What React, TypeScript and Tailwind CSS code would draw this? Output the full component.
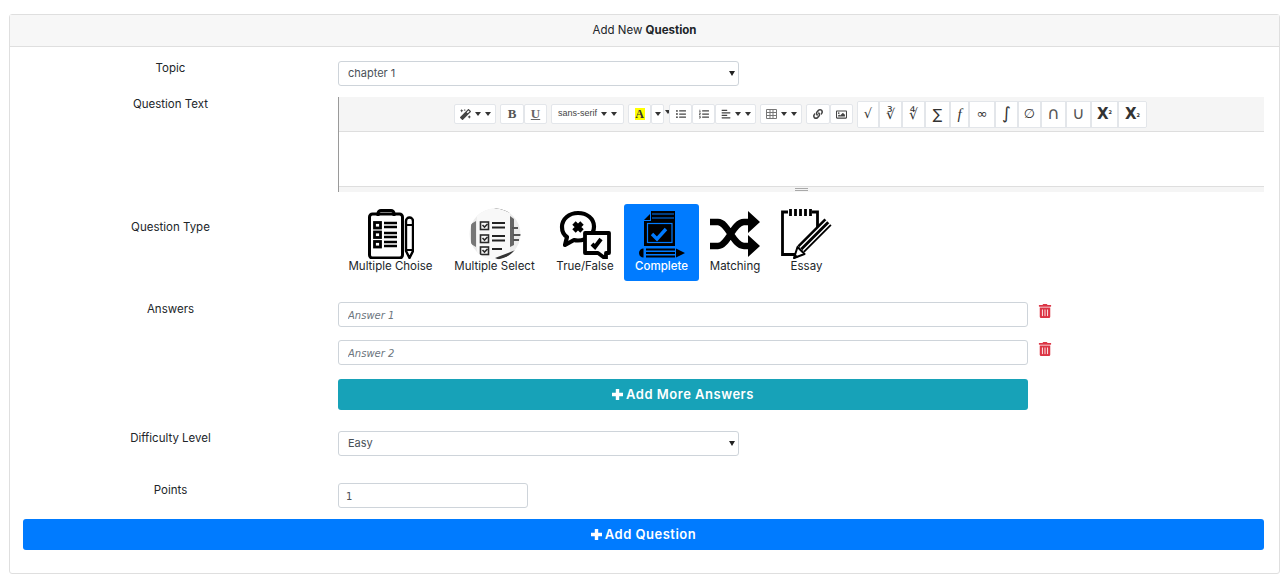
import React from "react";
import { FaMagic, FaListUl, FaListOl, FaAlignLeft, FaLink, FaRegImage, FaTrashAlt } from "react-icons/fa";

const Caret = () => <span className="inline-block w-0 h-0 border-x-[3px] border-x-transparent border-t-[4px] border-t-[#333]" />;

const Plus = () => (
  <svg width="11" height="11" viewBox="0 0 11 11" fill="#fff"><path d="M3.800 0h3.400v3.800H11v3.400H7.200V11H3.800V7.200H0V3.800h3.800z" /></svg>
);

function TB({ w, cls = "", children }: { w: number; cls?: string; children: React.ReactNode }) {
  return (
    <div style={{ width: w }} className={`h-[20px] bg-white border border-[#e3e6ea] rounded-[2px] flex items-center justify-center gap-[4px] text-[#444] ${cls}`}>
      {children}
    </div>
  );
}

function MB({ w, cls = "", children }: { w: number; cls?: string; children: React.ReactNode }) {
  return (
    <div style={{ width: w }} className={`h-[25px] bg-white border-r-2 border-[#e3e6ea] flex items-center justify-center text-[#333] font-['DejaVu_Sans',sans-serif] ${cls}`}>
      {children}
    </div>
  );
}

const ChoiceIcon = () => (
  <svg width="46" height="50" viewBox="0 0 46 50" fill="none" stroke="#000">
    <rect x="1.500" y="5" width="33" height="44" rx="3" strokeWidth="3" />
    <path d="M10 7V4.500a3 3 0 0 1 3-3h10a3 3 0 0 1 3 3V7" strokeWidth="3" />
    <rect x="6.500" y="13.500" width="6" height="5.500" strokeWidth="2.800" />
    <rect x="6.500" y="23" width="6" height="5.500" strokeWidth="2.800" />
    <rect x="6.500" y="32.500" width="6" height="5.500" strokeWidth="2.800" />
    <path d="M16 14h13M16 18h13M16 24h13M16 28h13M16 33h13M16 37h13" strokeWidth="2.400" />
    <path d="M38 12a3.500 3.500 0 0 1 7 0v30l-3.500 7-3.500-7z" strokeWidth="2.400" strokeLinejoin="round" />
    <path d="M38 16h7M38 41h7" strokeWidth="2" />
  </svg>
);

const SelectIcon = () => (
  <svg width="52" height="52" viewBox="0 0 52 52" fill="none">
    <defs><clipPath id="sc"><circle cx="26" cy="26" r="25.500" /></clipPath></defs>
    <g clipPath="url(#sc)">
      <rect width="52" height="52" fill="#ececec" />
      <path d="M2 16l5-3v26l-5-3z" fill="#777" />
      <path d="M25 0h18l2 5-12-1z" fill="#222" />
      <path d="M41 8l4 3v26l-4 2z" fill="#666" />
      <path d="M8 0h33v52H8z" fill="#f8f8f8" />
      <g stroke="#2a2a2a" strokeWidth="1.600">
        <rect x="11.500" y="14" width="8" height="7.500" />
        <rect x="11.500" y="27" width="8" height="7.500" />
        <rect x="11.500" y="39" width="8" height="7.500" />
        <path d="M13.500 17l2 2 3-3M13.500 30l2 2 3-3M13.500 42l2 2 3-3" />
      </g>
      <path d="M23 15h13M23 19.500h13M23 28h13M23 32.500h13M23 41h10" stroke="#222" strokeWidth="2" />
      <path d="M43 20h6M44 27h8M44 32h6" stroke="#555" strokeWidth="2" />
      <path d="M26 50l23-9 2 2-20 9z" fill="#333" />
    </g>
  </svg>
);

const TrueFalseIcon = () => (
  <svg width="52" height="50" viewBox="0 0 52 50" fill="none" stroke="#000">
    <path d="M19 4C10 4 3 10 3 18c0 4 2 8 5 10l-2 8 9-5c1 .3 3 .5 4 .5 9 0 16-6 16-14S28 4 19 4z" strokeWidth="4.200" strokeLinejoin="round" fill="#fff" />
    <path d="M15 14l8 8M23 14l-8 8" strokeWidth="4.800" />
    <path d="M26 24h24v20h-3v6l-8-6H26z" strokeWidth="3.800" strokeLinejoin="round" fill="#fff" />
    <path d="M33 35l3 3 6-8" strokeWidth="4" />
  </svg>
);

const CompleteIcon = () => (
  <svg width="46" height="50" viewBox="0 0 46 50">
    <path d="M5 11l6-6v6z" fill="#000" />
    <path d="M12 2h24v10H12z" fill="#000" />
    <path d="M13 5h22M13 9h22" stroke="#007bff" strokeWidth="1.200" />
    <rect x="5" y="12" width="31" height="25" fill="#000" />
    <rect x="8.500" y="14.500" width="24.500" height="19" fill="#000" stroke="#007bff" strokeWidth="1.200" />
    <path d="M13 25l5 5 9-10" stroke="#007bff" strokeWidth="3.400" fill="none" />
    <path d="M0 44a4.500 4.500 0 0 1 4.500-4.500V48.500A4.500 4.500 0 0 1 0 44zM7 39.500h29v2H7zM7 43h29v2H7zM7 46.500h29v2H7zM37 39.500l9 4.500-9 4.500z" fill="#000" />
  </svg>
);

const MatchingIcon = () => (
  <svg width="50" height="46" viewBox="0 0 50 46" fill="none" stroke="#000">
    <path d="M0 11h8c10 0 15 24 26 24h4M0 35h8c10 0 15-24 26-24h4" strokeWidth="6.500" />
    <path d="M38 0l12 11-12 11zM38 24l12 11-12 11z" fill="#000" stroke="none" />
  </svg>
);

const EssayIcon = () => (
  <svg width="52" height="50" viewBox="0 0 52 50" fill="none" stroke="#000">
    <path d="M7 3H1.500v42.500H15M31 3h5.500v19" strokeWidth="2.800" />
    <path d="M9.500 0v7M14.500 0v7M19.500 0v7M24.500 0v7M29.500 0v7" strokeWidth="2.800" />
    <path d="M20 40l27-27" stroke="#000" strokeWidth="10" />
    <path d="M19 38.500l27-27M22 41.500l27-27" stroke="#fff" strokeWidth="1.400" />
    <path d="M13 49l3.500-11 7 7z" fill="#fff" strokeWidth="2" strokeLinejoin="round" />
    <path d="M12.500 50l1.500-5 3.500 3z" fill="#000" stroke="none" />
  </svg>
);

const types = [
  { w: 105, label: "Multiple Choise", icon: <ChoiceIcon /> },
  { w: 103, label: "Multiple Select", icon: <SelectIcon /> },
  { w: 78, label: "True/False", icon: <TrueFalseIcon /> },
  { w: 75, label: "Complete", icon: <CompleteIcon />, active: true },
  { w: 72, label: "Matching", icon: <MatchingIcon /> },
  { w: 71, label: "Essay", icon: <EssayIcon /> },
];

function Row({ label, top, cls = "", children }: { label: string; top: number; cls?: string; children: React.ReactNode }) {
  return (
    <div className={`flex ${cls}`}>
      <div style={{ paddingTop: top }} className="w-[295px] shrink-0 text-center text-[11.500px] leading-[15px] text-[#212529]">{label}</div>
      <div className="ml-[20px] flex-1 min-w-0">{children}</div>
    </div>
  );
}

function Select({ text }: { text: string }) {
  return (
    <div className="relative w-[401px]">
      <select className="block appearance-none h-[25px] w-full border border-[#ced4da] rounded-[3px] bg-white pl-[9px] pb-[1px] text-[11px] text-[#495057] font-['Inter',sans-serif]">
        <option>{text}</option>
      </select>
      <span className="absolute right-[4px] top-[10px] w-0 h-0 border-x-[3.500px] border-x-transparent border-t-[5px] border-t-[#222]" />
    </div>
  );
}

function Answer({ text, cls }: { text: string; cls: string }) {
  return (
    <div className={`flex ${cls}`}>
      <input placeholder={text} className="h-[25px] w-[690px] border border-[#ced4da] rounded-[3px] bg-white px-[9px] pt-[1px] text-[10px] italic font-['DejaVu_Sans',sans-serif] placeholder:text-[#6c757d]" />
      <FaTrashAlt className="ml-[10px] mt-[2px] text-[#dc3545]" size={14} />
    </div>
  );
}

export default function App() {
  return (
    <div className="bg-white h-[586px] pt-[14px] pl-[9px] pr-[6px] font-['Inter',sans-serif] overflow-hidden">
      <div className="border border-[#dfdfdf] rounded-[3px] h-[560px]">
        <div className="h-[32px] bg-[#f7f7f7] border-b border-[#dfdfdf] flex items-center justify-center text-[11.500px] leading-[15px] text-[#212529]">
          Add New&nbsp;<b className="font-bold">Question</b>
        </div>
        <div className="pl-[13px] pr-[15px]">
          <Row label="Topic" top={0} cls="mt-[14px]">
            <Select text="chapter 1" />
          </Row>
          <Row label="Question Text" top={0} cls="mt-[11px]">
            <div className="h-[95px] border-l border-[#9a9a9a] flex flex-col">
              <div className="h-[35px] bg-[#f5f5f5] border-b border-[#dedede] flex items-center justify-center gap-[4px] text-[9px] pr-[2px]">
                <TB w={42}><FaMagic size={11} /><Caret /><Caret /></TB>
                <div className="flex">
                  <TB w={24} cls="font-['Liberation_Serif',serif] font-bold text-[13px] text-[#555]">B</TB>
                  <TB w={23} cls="font-['Liberation_Serif',serif] font-bold text-[13px] underline text-[#666]">U</TB>
                </div>
                <TB w={73} cls="font-['Liberation_Sans',sans-serif] text-[9px]">sans-serif <Caret /><Caret /></TB>
                <div className="flex">
                  <TB w={23}><span className="bg-[#ffff00] w-[10px] h-[12px] flex items-center justify-center font-['Liberation_Serif',serif] font-bold text-[12px] leading-none text-[#333]">A</span></TB>
                  <TB w={13}><Caret /></TB>
                  <div className="w-[5px] pl-[1px]"><Caret /></div>
                  <TB w={23}><FaListUl size={10} /></TB>
                  <TB w={23}><FaListOl size={10} /></TB>
                  <TB w={41}><FaAlignLeft size={10} /><Caret /><Caret /></TB>
                </div>
                <TB w={42}>
                  <svg width="11" height="10" viewBox="0 0 11 10" fill="none" stroke="#777"><path d="M.5.500h10v9H.5zM.5 3.500h10M.5 6.500h10M4 .500v9M7 .500v9" /></svg>
                  <Caret /><Caret />
                </TB>
                <div className="flex">
                  <TB w={24}><FaLink size={10} /></TB>
                  <TB w={23}><FaRegImage size={11} /></TB>
                </div>
                <div className="flex border border-[#e3e6ea] rounded-[2px] overflow-hidden">
                  <MB w={22} cls="text-[13px]">√</MB>
                  <MB w={23} cls="text-[14px]">∛</MB>
                  <MB w={23} cls="text-[14px]">∜</MB>
                  <MB w={25} cls="text-[14px]">∑</MB>
                  <MB w={19} cls="text-[15px] italic !font-['Liberation_Serif',serif]">f</MB>
                  <MB w={26} cls="text-[13px]">∞</MB>
                  <MB w={23} cls="text-[17px]">∫</MB>
                  <MB w={23} cls="text-[13px]">∅</MB>
                  <MB w={25} cls="text-[17px] text-[#555]">∩</MB>
                  <MB w={25} cls="text-[17px] text-[#555]">∪</MB>
                  <MB w={27} cls="text-[15px] font-bold">X<sup className="text-[5px]">2</sup></MB>
                  <div className="w-[27px] h-[25px] bg-white flex items-center justify-center text-[15px] font-bold text-[#333] font-['DejaVu_Sans',sans-serif]">X<sub className="text-[5px]">2</sub></div>
                </div>
              </div>
              <div className="flex-1 bg-white" />
              <div className="h-[6px] bg-[#f5f5f5] border-t border-[#dedede] flex flex-col items-center pt-[1px] gap-[1px]">
                <div className="w-[13px] h-px bg-[#a9a9a9]" />
                <div className="w-[13px] h-px bg-[#a9a9a9]" />
              </div>
            </div>
          </Row>
          <Row label="Question Type" top={16} cls="mt-[12px]">
            <div className="flex">
              {types.map((t) => (
                <div key={t.label} style={{ width: t.w }} className={`h-[77px] rounded-[3px] flex flex-col items-center pt-[5px] ${t.active ? "bg-[#007bff] text-white font-medium" : "text-[#212529]"}`}>
                  <div className="h-[50px] flex items-center justify-center">{t.icon}</div>
                  <div className="text-[11.500px] leading-[15px] whitespace-nowrap">{t.label}</div>
                </div>
              ))}
            </div>
          </Row>
          <Row label="Answers" top={0} cls="mt-[21px]">
            <Answer text="Answer 1" cls="" />
            <Answer text="Answer 2" cls="mt-[13px]" />
            <button className="mt-[14px] h-[31px] w-[690px] rounded-[3px] bg-[#17a2b8] text-white text-[13px] tracking-[0.5px] font-semibold flex items-center justify-center gap-[3px]">
              <Plus />Add More Answers
            </button>
          </Row>
          <Row label="Difficulty Level" top={0} cls="mt-[21px]">
            <Select text="Easy" />
          </Row>
          <Row label="Points" top={0} cls="mt-[27px]">
            <input defaultValue="1" className="block h-[25px] w-[190px] border border-[#ced4da] rounded-[3px] bg-white px-[7px] pt-[1px] text-[10px] text-[#495057] font-['DejaVu_Sans',sans-serif]" />
          </Row>
          <button className="mt-[11px] h-[31px] w-full rounded-[3px] bg-[#007bff] text-white text-[13px] tracking-[0.5px] font-semibold flex items-center justify-center gap-[3px]">
            <Plus />Add Question
          </button>
        </div>
      </div>
    </div>
  );
}
